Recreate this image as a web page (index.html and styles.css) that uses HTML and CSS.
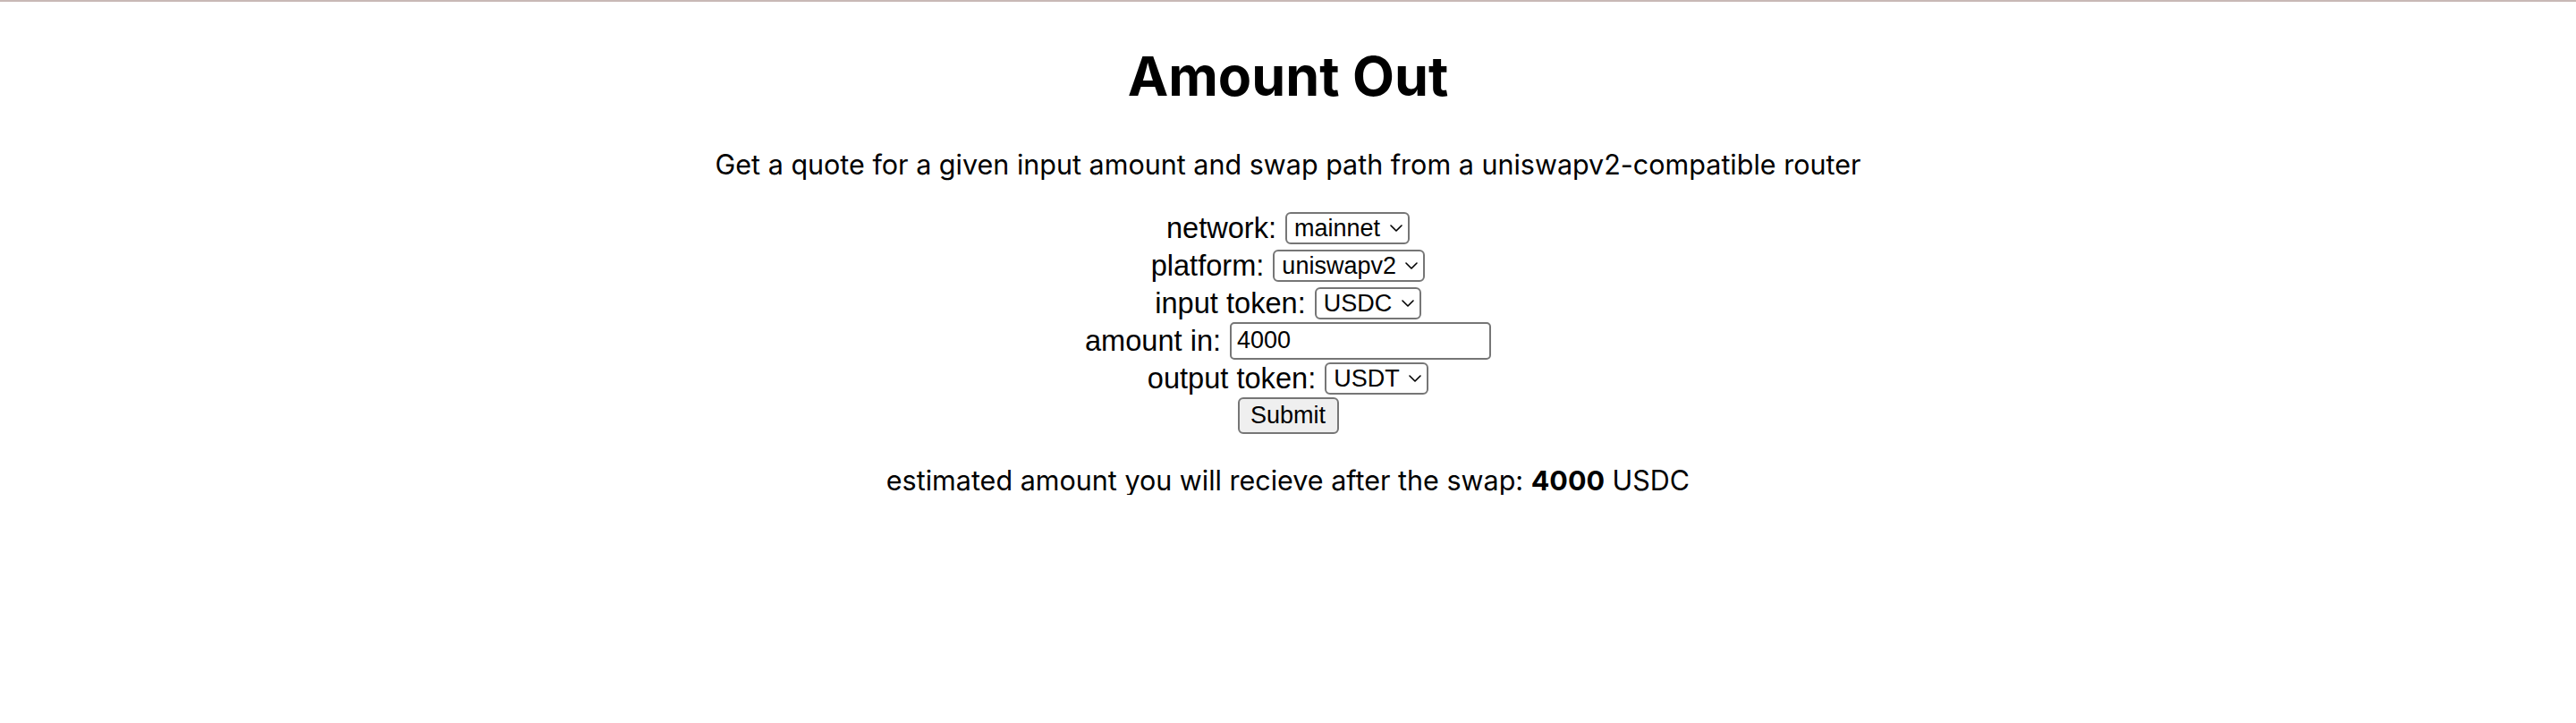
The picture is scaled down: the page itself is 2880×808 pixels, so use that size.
FILE: index.html
```html
<!DOCTYPE html>
<html lang="en">
<head>
<meta charset="utf-8">
<title>Amount Out</title>
<link rel="stylesheet" href="styles.css">
</head>
<body>
<main class="page">
  <h1 class="title">Amount Out</h1>
  <p class="subtitle">Get a quote for a given input amount and swap path from a uniswapv2-compatible router</p>
  <form class="quote-form">
    <div class="row">
      <label class="label" for="network">network:</label>
      <span class="select-wrap">
        <select id="network" class="select"><option>mainnet</option></select>
        <svg class="chev" viewBox="0 0 14 8" width="14" height="8"><path d="M1 1l6 6 6-6" fill="none" stroke="#000" stroke-width="1.6" stroke-linecap="round" stroke-linejoin="round"/></svg>
      </span>
    </div>
    <div class="row">
      <label class="label" for="platform">platform:</label>
      <span class="select-wrap">
        <select id="platform" class="select"><option>uniswapv2</option></select>
        <svg class="chev" viewBox="0 0 14 8" width="14" height="8"><path d="M1 1l6 6 6-6" fill="none" stroke="#000" stroke-width="1.6" stroke-linecap="round" stroke-linejoin="round"/></svg>
      </span>
    </div>
    <div class="row">
      <label class="label" for="tokenIn">input token:</label>
      <span class="select-wrap">
        <select id="tokenIn" class="select"><option>USDC</option></select>
        <svg class="chev" viewBox="0 0 14 8" width="14" height="8"><path d="M1 1l6 6 6-6" fill="none" stroke="#000" stroke-width="1.6" stroke-linecap="round" stroke-linejoin="round"/></svg>
      </span>
    </div>
    <div class="row">
      <label class="label" for="amountIn">amount in:</label>
      <input id="amountIn" class="text-input" type="text" value="4000">
    </div>
    <div class="row">
      <label class="label" for="tokenOut">output token:</label>
      <span class="select-wrap">
        <select id="tokenOut" class="select"><option>USDT</option></select>
        <svg class="chev" viewBox="0 0 14 8" width="14" height="8"><path d="M1 1l6 6 6-6" fill="none" stroke="#000" stroke-width="1.6" stroke-linecap="round" stroke-linejoin="round"/></svg>
      </span>
    </div>
    <div class="row">
      <button type="button" class="submit">Submit</button>
    </div>
  </form>
  <p class="result">estimated amount you will recieve after the swap: <b>4000</b> USDC</p>
</main>
</body>
</html>
```
FILE: styles.css
```css
html, body {
  margin: 0;
  padding: 0;
  background: #fff;
}
body {
  border-top: 2px solid #c8b9b6;
  color: #000;
  font-family: Inter, "Noto Sans", sans-serif;
}
.page {
  display: flex;
  flex-direction: column;
  align-items: center;
}
.title {
  margin: 51px 0 0;
  font-size: 61px;
  line-height: 64px;
  font-weight: 700;
}
.subtitle {
  margin: 50.6px 0 0;
  font-size: 30.5px;
  line-height: 32px;
}
.quote-form {
  margin-top: 35px;
  display: flex;
  flex-direction: column;
  align-items: center;
}
.row {
  height: 41.8px;
  display: flex;
  align-items: center;
  justify-content: center;
  gap: 10px;
}
.label {
  font-family: "Liberation Sans", Arial, sans-serif;
  font-size: 32.6px;
  line-height: 36px;
}
.select-wrap {
  position: relative;
  display: inline-flex;
}
.select {
  appearance: none;
  -webkit-appearance: none;
  box-sizing: border-box;
  height: 36px;
  margin: 0;
  padding: 0 30px 0 8px;
  border: 2px solid #767676;
  border-radius: 6px;
  background: #fff;
  color: #000;
  font-family: "Liberation Sans", Arial, sans-serif;
  font-size: 27px;
}
.chev {
  position: absolute;
  right: 8px;
  top: 14px;
  pointer-events: none;
}
.text-input {
  box-sizing: border-box;
  width: 292px;
  height: 42px;
  margin: 0;
  padding: 0 6px;
  border: 2px solid #767676;
  border-radius: 5px;
  font-family: "Liberation Sans", Arial, sans-serif;
  font-size: 27px;
  color: #000;
}
.submit {
  box-sizing: border-box;
  width: 113px;
  height: 41px;
  margin: 0;
  padding: 0;
  border: 2px solid #767676;
  border-radius: 6px;
  background: #efefef;
  font-family: "Liberation Sans", Arial, sans-serif;
  font-size: 27px;
  color: #000;
}
.result {
  margin: 35.3px 0 0;
  font-size: 30.5px;
  line-height: 32px;
}
.result b {
  font-weight: 700;
}
```
